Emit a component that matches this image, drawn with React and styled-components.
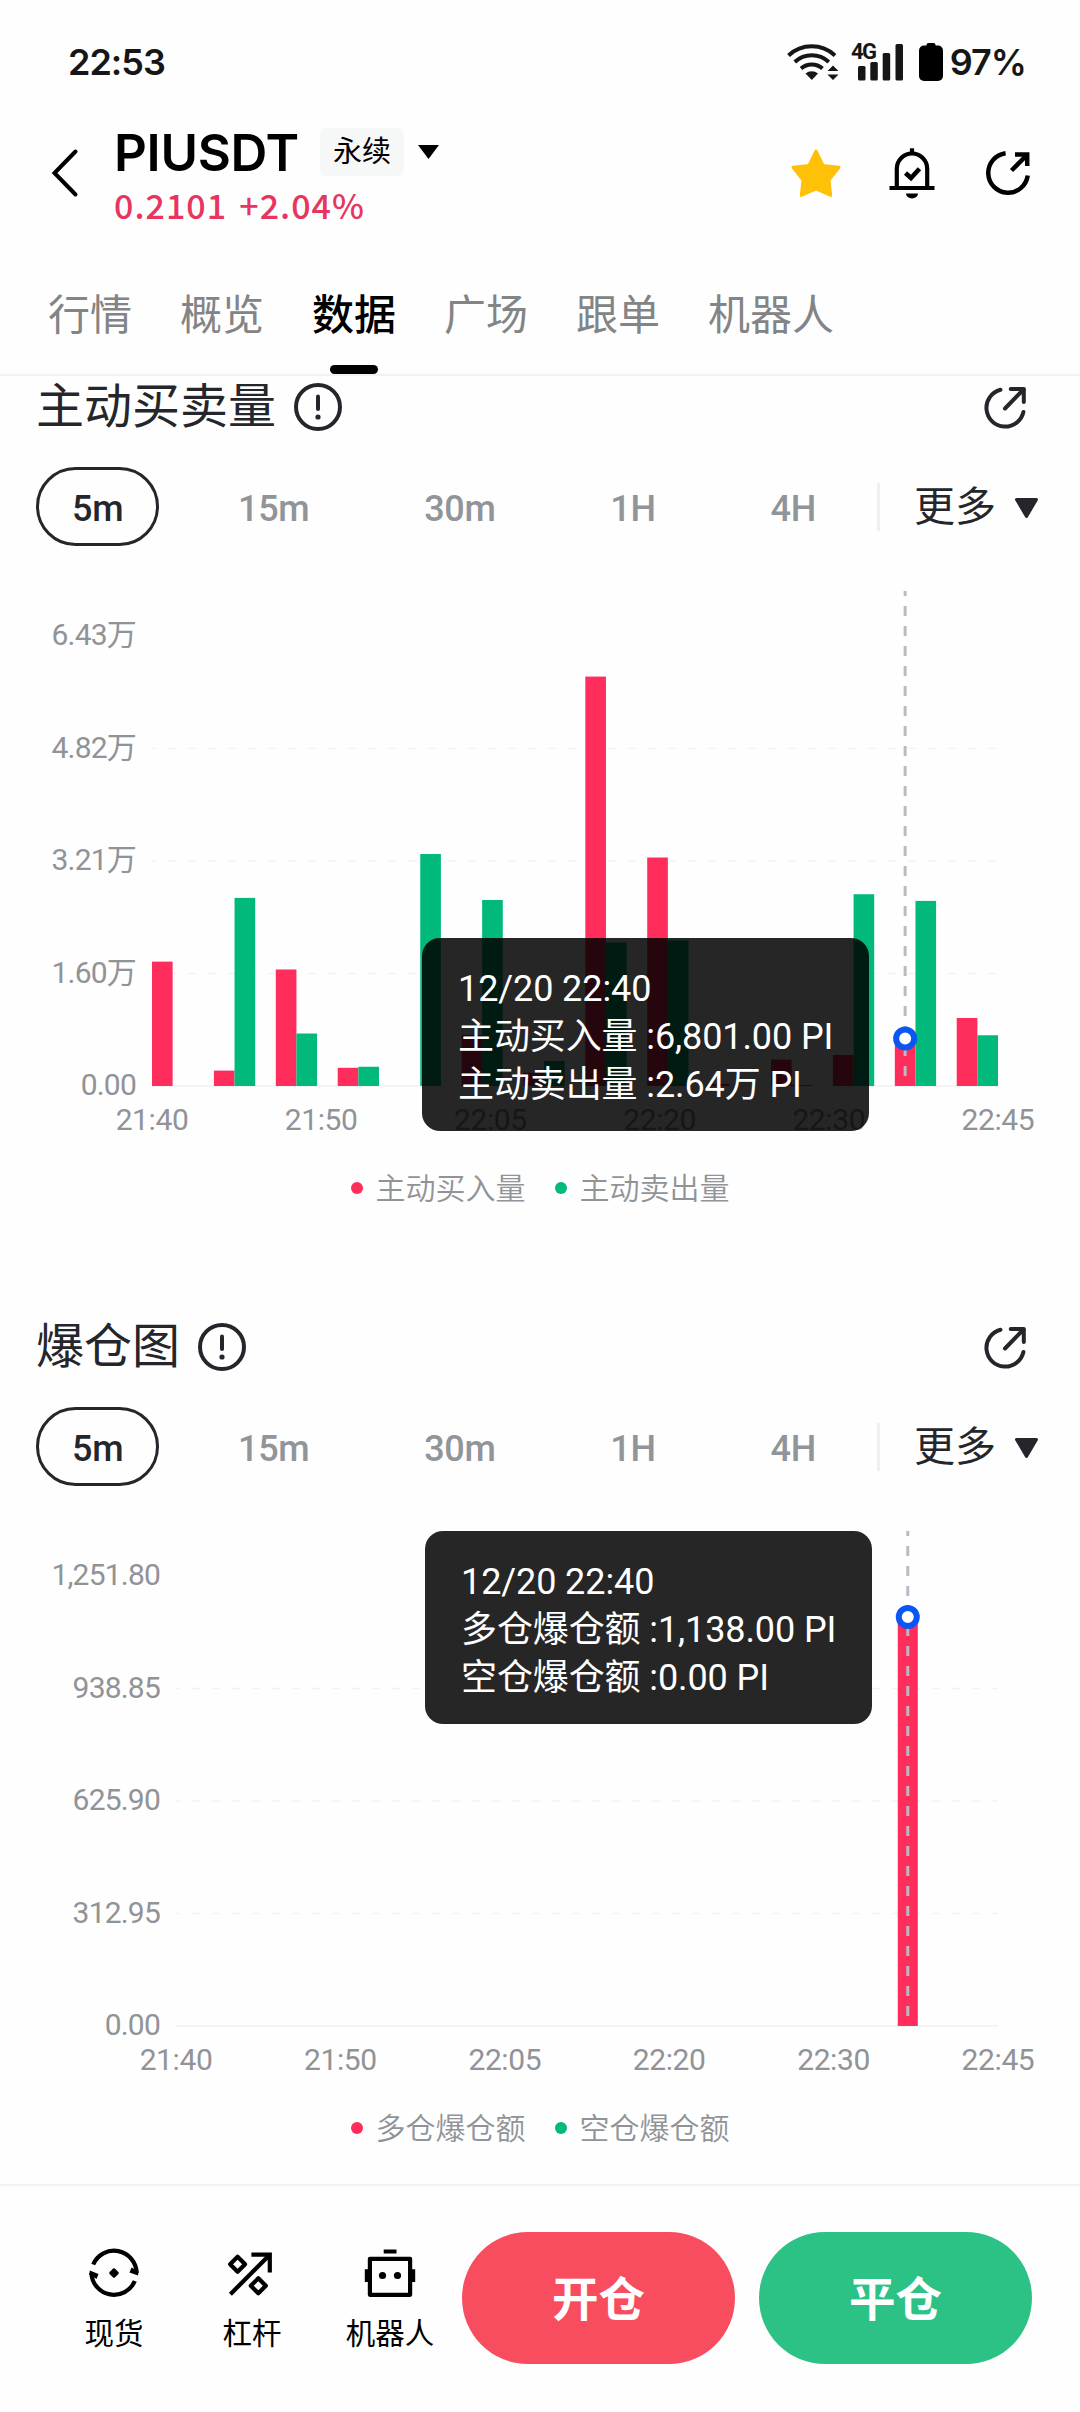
import React from 'react';
import styled, { createGlobalStyle } from 'styled-components';

const GlobalStyle = createGlobalStyle`
  * {
    box-sizing: border-box;
  }

  body {
    margin: 0;
    background: #fefefe;
    font-family: Roboto, "Noto Sans CJK SC", sans-serif;
    -webkit-font-smoothing: antialiased;
  }

  svg {
    display: block;
    overflow: visible;
    flex-shrink: 0;
  }
`;

const RED = '#ff2d5b';
const GREEN = '#00b97b';
const INK = '#25262b';

const Page = styled.div`
  display: flex;
  flex-direction: column;
  width: 1080px;
  height: 2412px;
  overflow: hidden;
`;

const StatusBar = styled.div`
  display: flex;
  align-items: center;
  justify-content: space-between;
  height: 123px;
  margin-bottom: -1px;
  padding: 0 54px 0 68px;
  font-family: Inter, sans-serif;
  font-size: 36px;
  font-weight: 600;
  letter-spacing: -1px;
  color: #161616;
`;

const StatusIcons = styled.div`
  display: flex;
  align-items: center;
`;

const Percent = styled.span`
  margin-left: 7px;
`;

const SignalText = styled.text`
  font-family: Roboto, sans-serif;
  font-size: 22px;
  font-weight: 700;
  letter-spacing: -1.5px;
`;

const Header = styled.div`
  display: flex;
  align-items: center;
  height: 101px;
  padding: 0 48px 0 48px;
  color: #000;
`;

const Symbol = styled.div`
  display: flex;
  flex-direction: column;
  margin-left: 35px;
`;

const SymbolRow = styled.div`
  display: flex;
  align-items: center;
  height: 69px;
`;

const Pair = styled.h1`
  margin: 0;
  width: 206px;
  font-family: Inter, sans-serif;
  font-size: 51px;
  font-weight: 600;
  letter-spacing: -0.3px;
  white-space: nowrap;
`;

const Badge = styled.span`
  width: 84px;
  height: 48px;
  margin-right: 14px;
  border-radius: 6px;
  background: #f6f7f7;
  font-size: 29px;
  line-height: 48px;
  text-align: center;
`;

const Price = styled.div`
  height: 41px;
  font-family: "Noto Sans CJK SC", sans-serif;
  font-size: 34px;
  font-weight: 500;
  line-height: 35px;
  letter-spacing: 1px;
  word-spacing: -2.5px;
  white-space: pre;
  color: #e8355f;
`;

const HeaderIcons = styled.div`
  display: flex;
  gap: 48px;
  margin-left: auto;
`;

const Tabs = styled.div`
  display: flex;
  gap: 48px;
  height: 153px;
  padding: 63px 48px 0;
  border-bottom: 2px solid #f1f2f2;
`;

const Tab = styled.div`
  display: flex;
  flex-direction: column;
  align-items: center;
  font-size: 42px;
  font-weight: ${({ $active }) => ($active ? 500 : 400)};
  line-height: 60px;
  color: ${({ $active }) => ($active ? '#000' : '#828485')};

  &::after {
    content: '';
    width: 48px;
    height: 9px;
    margin-top: 19px;
    border-radius: 5px;
    background: ${({ $active }) => ($active ? '#000' : 'transparent')};
  }
`;

const Content = styled.div`
  flex: 1;
  min-height: 0;
  overflow: hidden;
`;

const Section = styled.section`
  height: 940px;
  padding: 3px 36px 0;
`;

const SectionHeader = styled.div`
  display: flex;
  align-items: center;
  justify-content: space-between;
  height: 56px;
  padding-right: 15px;
  color: ${INK};
`;

const SectionTitle = styled.h2`
  display: flex;
  align-items: center;
  gap: 18px;
  margin: 0;
  font-size: 48px;
  font-weight: 400;
  line-height: 56px;
`;

const Intervals = styled.div`
  display: flex;
  align-items: center;
  height: 79px;
  margin-top: 32px;
`;

const IntervalList = styled.div`
  display: flex;
  justify-content: space-between;
  width: 816px;
`;

const Interval = styled.button`
  height: 79px;
  padding: 4px 33px 0;
  border: 3px solid ${({ $active }) => ($active ? INK : 'transparent')};
  border-radius: 40px;
  background: none;
  font-family: inherit;
  font-size: 36px;
  font-weight: 500;
  letter-spacing: -0.3px;
  color: ${({ $active }) => ($active ? INK : '#919498')};
`;

const More = styled.div`
  display: flex;
  align-items: center;
  height: 48px;
  margin-left: 25px;
  padding-left: 34px;
  border-left: 3px solid #eef0f2;
  font-size: 41px;
  font-weight: 400;
  line-height: 48px;
  color: ${INK};

  svg {
    margin: 2px 0 0 19px;
  }
`;

const ChartBox = styled.div`
  position: relative;
  margin-top: 44px;
  color: #909397;
  font-size: 30px;
  line-height: 36px;
`;

const ChartGrid = styled.div`
  display: grid;
  grid-template-columns: ${({ $axis }) => $axis}px 1fr;
  height: 512px;
`;

const YAxis = styled.div`
  display: flex;
  flex-direction: column;
  justify-content: space-between;
  align-items: flex-end;
  height: 513px;
  padding: 27px 16px 0 0;
  letter-spacing: -0.8px;
`;

const XAxis = styled.div`
  display: flex;
  justify-content: space-between;
  width: ${({ $width }) => $width}px;
  margin-left: ${({ $axis }) => $axis}px;
  letter-spacing: -0.4px;
`;

const XTick = styled.span`
  display: flex;
  justify-content: center;
  width: 0;
`;

const Legend = styled.div`
  display: flex;
  justify-content: center;
  gap: 29px;
  margin-top: 33px;
`;

const LegendItem = styled.div`
  display: flex;
  align-items: center;
  font-weight: 350;

  &::before {
    content: '';
    width: 12px;
    height: 12px;
    margin: 0 13px 2px 0;
    border-radius: 50%;
    background: ${({ $color }) => $color};
  }
`;

const Tooltip = styled.div`
  position: absolute;
  left: ${({ $left }) => $left}px;
  top: ${({ $top }) => $top}px;
  width: 447px;
  height: 193px;
  padding: 27px 36px 0;
  border-radius: 18px;
  background: rgba(0, 0, 0, 0.85);
  color: #fff;
  font-size: 36px;
  line-height: 48px;
  letter-spacing: -0.1px;
  white-space: nowrap;
`;

const Footer = styled.div`
  display: flex;
  height: 228px;
  padding: 46px 48px 0 45px;
  border-top: 2px solid #f1f2f2;
  background: #fefefe;
`;

const Shortcut = styled.div`
  display: flex;
  flex-direction: column;
  align-items: center;
  width: 138px;
  padding-top: 16px;
  font-size: 29.5px;
  line-height: 40px;
  color: #000;

  span {
    margin-top: 16px;
  }
`;

const TradeButton = styled.button`
  width: 273px;
  height: 132px;
  margin-left: ${({ $gap }) => $gap}px;
  padding: 0 0 6px;
  border: none;
  border-radius: 66px;
  background: ${({ $color }) => $color};
  color: #fff;
  font-family: inherit;
  font-size: 46.5px;
  font-weight: 700;
`;

const WifiIcon = () => (
  <svg width="52" height="38" viewBox="0 0 52 38" fill="none" stroke="#161616" strokeWidth="4">
    <path d="M1.5 12.5 A34 34 0 0 1 48 12.5" />
    <path d="M7.8 19 A25 25 0 0 1 41.8 19" />
    <path d="M14 25.5 A16.5 16.5 0 0 1 35.5 25.5" />
    <path d="M24.8 37 L18.5 30.5 A9.5 9.5 0 0 1 31 30.5 Z" fill="#161616" stroke="none" />
    <path d="M46 22.5 L51.5 28 H40.5 Z M46 37 L51.5 31.5 H40.5 Z" fill="#161616" stroke="none" />
  </svg>
);

const SignalIcon = styled(({ className }) => (
  <svg className={className} width="54" height="38" viewBox="0 0 54 38" fill="#161616">
    <SignalText x="0" y="16">4G</SignalText>
    <rect x="7" y="23" width="7.5" height="14.5" rx="1.5" />
    <rect x="19.3" y="19" width="7.5" height="18.5" rx="1.5" />
    <rect x="31.7" y="10" width="7.5" height="27.5" rx="1.5" />
    <rect x="44.5" y="1" width="7.5" height="36.5" rx="1.5" />
  </svg>
))`
  margin: 0 14px 0 12px;
`;

const BatteryIcon = () => (
  <svg width="24" height="38" viewBox="0 0 24 38" fill="#000">
    <rect x="7.5" y="0" width="9" height="6" rx="2" />
    <rect x="0" y="2.5" width="24" height="35.5" rx="5" />
  </svg>
);

const BackIcon = () => (
  <svg width="31" height="48" viewBox="0 0 31 48" fill="none" stroke="#000" strokeWidth="4">
    <path d="M27.5 2.5 L6.5 24 L27.5 45.5" strokeLinecap="round" />
  </svg>
);

const CaretIcon = ({ width, height, color, round = 0 }) => (
  <svg width={width} height={height} viewBox={`0 0 ${width} ${height}`}>
    <path
      d={`M${round / 2} ${round / 2} H${width - round / 2} L${width / 2} ${height - round / 2} Z`}
      fill={color}
      stroke={color}
      strokeWidth={round}
      strokeLinejoin="round"
    />
  </svg>
);

const StarIcon = () => (
  <svg width="48" height="48" viewBox="0 0 48 48" fill="#ffc107" stroke="#ffc107" strokeWidth="3" strokeLinejoin="round">
    <path d="M24 2 L31 16.5 L47 18.3 L37 31 L38.7 46.5 L24 40 L9.3 46.5 L11 31 L1 18.3 L17 16.5 Z" />
  </svg>
);

const BellIcon = () => (
  <svg width="48" height="48" viewBox="0 0 48 48" fill="none" stroke="#000" strokeWidth="4.2">
    <path d="M24 -0.7 V4" />
    <path d="M8.8 39 V19.7 A15.2 15.2 0 0 1 39.2 19.7 V39" />
    <path d="M1.5 39 H46.5" />
    <path d="M17.5 24 L23 29 L31.5 19.8" strokeWidth="4.6" />
    <path d="M18 44.5 H30 A6 5 0 0 1 18 44.5 Z" fill="#000" stroke="none" />
  </svg>
);

const ShareIcon = () => (
  <svg width="48" height="48" viewBox="0 0 48 48" fill="none" stroke="#000" strokeWidth="4.5">
    <path d="M21.6 4.3 A19.8 19.8 0 1 0 43.7 26.5" />
    <path d="M27.5 21.5 L42.5 6.5" />
    <path d="M31 5.5 H43.2 V17" />
  </svg>
);

const ExportIcon = () => (
  <svg
    width="48"
    height="48"
    viewBox="0 0 48 48"
    fill="none"
    stroke={INK}
    strokeWidth="4"
    strokeLinecap="round"
    strokeLinejoin="round"
  >
    <path d="M19.5 6.8 A18.7 18.7 0 1 0 42.4 29" />
    <path d="M24 25.5 L42.5 6.5" />
    <path d="M29.7 6 H42.8 V19" />
  </svg>
);

const InfoIcon = () => (
  <svg width="48" height="48" viewBox="0 0 48 48" fill="none" stroke={INK} strokeWidth="4">
    <circle cx="24" cy="24" r="22" />
    <path d="M24 13.5 V26" strokeLinecap="round" />
    <circle cx="24" cy="34" r="2.6" fill={INK} stroke="none" />
  </svg>
);

const SpotIcon = () => (
  <svg width="50" height="50" viewBox="0 0 50 50" fill="none" stroke="#000" strokeWidth="4.2">
    <path d="M4.2 16.5 A22.6 22.6 0 0 1 47.6 25" />
    <path d="M45.8 33 A22.6 22.6 0 0 1 2.4 25" />
    <path d="M49.5 23 L49 27.5 L40.5 24.5 L42.5 19.5 L46 21.5 Z" fill="#000" stroke="none" />
    <path d="M0.3 27 L0.8 22.5 L9.5 26 L7.5 31 L4 28.5 Z" fill="#000" stroke="none" />
    <path d="M25 21.5 L28.5 25 L25 28.5 L21.5 25 Z" fill="#000" strokeWidth="2.5" strokeLinejoin="round" />
  </svg>
);

const LeverageIcon = () => (
  <svg width="50" height="50" viewBox="0 0 50 50" fill="none" stroke="#000" strokeWidth="4.2">
    <path d="M10.6 8.8 L18.1 16.3 L10.6 23.8 L3.1 16.3 Z" strokeLinejoin="round" />
    <path d="M31.3 30.3 L38.8 37.8 L31.3 45.3 L23.8 37.8 Z" strokeLinejoin="round" />
    <path d="M3.4 46.2 L42.5 7" />
    <path d="M24.4 6.7 H42.8 V24.6" />
  </svg>
);

const RobotIcon = () => (
  <svg width="50" height="50" viewBox="0 0 50 50" fill="none" stroke="#000" strokeWidth="4.2">
    <rect x="4.9" y="10.8" width="40.2" height="36" strokeLinejoin="round" />
    <path d="M1.9 21.3 V34 M48.1 21.3 V34 M18.7 3.5 H31.5" />
    <circle cx="17.5" cy="27.5" r="3.6" fill="#000" stroke="none" />
    <circle cx="32.5" cy="27.5" r="3.6" fill="#000" stroke="none" />
  </svg>
);

const intervals = ['5m', '15m', '30m', '1H', '4H'];
const times = ['21:40', '21:50', '22:05', '22:20', '22:30', '22:45'];

// [long, short] pairs, one per five minute bucket
const volume = {
  title: '主动买卖量',
  max: 64300,
  axis: 116,
  width: 846,
  ticks: ['6.43万', '4.82万', '3.21万', '1.60万', '0.00'],
  legend: ['主动买入量', '主动卖出量'],
  data: [
    [17770, 0],
    [2200, 26880],
    [16650, 7500],
    [2600, 2750],
    [0, 33150],
    [7300, 26580],
    [1900, 3570],
    [58500, 20500],
    [32650, 20800],
    [300, 0],
    [3780, 150],
    [4430, 27400],
    [6801, 26450],
    [9720, 7250],
  ],
  tooltip: { left: 386, top: 348, lines: ['12/20 22:40', '主动买入量 :6,801.00 PI', '主动卖出量 :2.64万 PI'] },
};

const liquidation = {
  title: '爆仓图',
  max: 1251.8,
  axis: 140,
  width: 822,
  ticks: ['1,251.80', '938.85', '625.90', '312.95', '0.00'],
  legend: ['多仓爆仓额', '空仓爆仓额'],
  data: Array.from({ length: 14 }, (_, i) => [i === 12 ? 1138 : 0, 0]),
  tooltip: { left: 389, top: 1, lines: ['12/20 22:40', '多仓爆仓额 :1,138.00 PI', '空仓爆仓额 :0.00 PI'] },
};

const SELECTED = 12;
const BASE = 496;
const PLOT = 450;

const Plot = ({ data, max, width }) => {
  // 14 groups of two bars with a one-bar gap in between
  const bar = width / 41;
  const toY = (value) => BASE - (value / max) * PLOT;
  const cursorX = (SELECTED * 3 + 0.5) * bar;

  return (
    <svg width={width} height={BASE}>
      {[1, 2, 3].map((i) => (
        <line
          key={i}
          x1="0"
          x2={width}
          y1={BASE - (PLOT / 4) * i}
          y2={BASE - (PLOT / 4) * i}
          stroke="#f1f2f3"
          strokeWidth="1.5"
          strokeDasharray="8 12"
          strokeDashoffset="4"
        />
      ))}
      <line x1="0" x2={width} y1={BASE} y2={BASE} stroke="#f3f4f5" strokeWidth="2" />
      {data.map(([buy, sell], i) => (
        <g key={i}>
          <rect x={i * 3 * bar} y={toY(buy)} width={bar} height={BASE - toY(buy)} fill={RED} />
          <rect x={(i * 3 + 1) * bar} y={toY(sell)} width={bar} height={BASE - toY(sell)} fill={GREEN} />
        </g>
      ))}
      <line
        x1={cursorX}
        x2={cursorX}
        y1="1"
        y2={BASE - 4}
        stroke="#b9bbc4"
        strokeWidth="3"
        strokeDasharray="10 10"
        strokeDashoffset="5"
      />
      <circle cx={cursorX} cy={toY(data[SELECTED][0])} r="9" fill="#fff" stroke="#0a56f5" strokeWidth="6" />
    </svg>
  );
};

const ChartSection = ({ chart }) => (
  <Section>
    <SectionHeader>
      <SectionTitle>
        {chart.title}
        <InfoIcon />
      </SectionTitle>
      <ExportIcon />
    </SectionHeader>
    <Intervals>
      <IntervalList>
        {intervals.map((label, i) => (
          <Interval key={label} $active={i === 0}>{label}</Interval>
        ))}
      </IntervalList>
      <More>
        更多
        <CaretIcon width={23} height={20} color={INK} round={3} />
      </More>
    </Intervals>
    <ChartBox>
      <ChartGrid $axis={chart.axis}>
        <YAxis>
          {chart.ticks.map((tick) => (
            <span key={tick}>{tick}</span>
          ))}
        </YAxis>
        <Plot data={chart.data} max={chart.max} width={chart.width} />
      </ChartGrid>
      <XAxis $axis={chart.axis} $width={chart.width}>
        {times.map((time) => (
          <XTick key={time}>{time}</XTick>
        ))}
      </XAxis>
      <Legend>
        <LegendItem $color={RED}>{chart.legend[0]}</LegendItem>
        <LegendItem $color={GREEN}>{chart.legend[1]}</LegendItem>
      </Legend>
      <Tooltip $left={chart.tooltip.left} $top={chart.tooltip.top}>
        {chart.tooltip.lines.map((line) => (
          <div key={line}>{line}</div>
        ))}
      </Tooltip>
    </ChartBox>
  </Section>
);

const App = () => {
  return (
    <Page>
      <GlobalStyle />
      <StatusBar>
        <span>22:53</span>
        <StatusIcons>
          <WifiIcon />
          <SignalIcon />
          <BatteryIcon />
          <Percent>97%</Percent>
        </StatusIcons>
      </StatusBar>

      <Header>
        <BackIcon />
        <Symbol>
          <SymbolRow>
            <Pair>PIUSDT</Pair>
            <Badge>永续</Badge>
            <CaretIcon width={21} height={14} color="#000" />
          </SymbolRow>
          <Price>0.2101  +2.04%</Price>
        </Symbol>
        <HeaderIcons>
          <StarIcon />
          <BellIcon />
          <ShareIcon />
        </HeaderIcons>
      </Header>

      <Tabs>
        {['行情', '概览', '数据', '广场', '跟单', '机器人'].map((tab) => (
          <Tab key={tab} $active={tab === '数据'}>{tab}</Tab>
        ))}
      </Tabs>

      <Content>
        <ChartSection chart={volume} />
        <ChartSection chart={liquidation} />
      </Content>

      <Footer>
        <Shortcut><SpotIcon /><span>现货</span></Shortcut>
        <Shortcut><LeverageIcon /><span>杠杆</span></Shortcut>
        <Shortcut><RobotIcon /><span>机器人</span></Shortcut>
        <TradeButton $color="#f84d5f" $gap={3}>开仓</TradeButton>
        <TradeButton $color="#2cc286" $gap={24}>平仓</TradeButton>
      </Footer>
    </Page>
  );
};

export default App;
